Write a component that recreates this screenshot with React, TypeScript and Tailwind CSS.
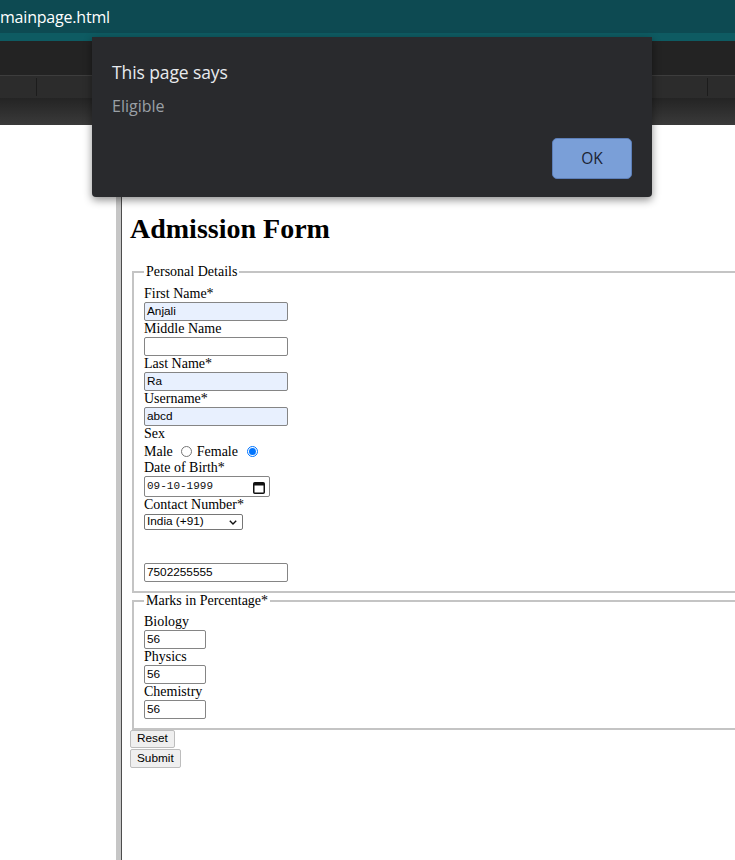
import React from "react";

const serif = "font-['Liberation_Serif','Times_New_Roman',serif]";

function Label({ children }: { children: React.ReactNode }) {
  return <div className="h-[16px] leading-[16px] whitespace-nowrap">{children}</div>;
}

function TextBox({ value, filled, narrow }: { value?: string; filled?: boolean; narrow?: boolean }) {
  return (
    <div
      className={`h-[19px] ${narrow ? "w-[62px]" : "w-[144px]"} border border-[#858585] rounded-[2px] px-[2px] text-[11.8px] leading-[17px] text-black font-['Liberation_Sans',Arial,sans-serif] ${filled ? "bg-[#e8f0fe]" : "bg-white"}`}
    >
      {value}
    </div>
  );
}

function Legend({ children }: { children: React.ReactNode }) {
  return <legend className="px-[2px] leading-[16px]">{children}</legend>;
}

export default function App() {
  return (
    <div className={`relative w-[735px] h-[860px] overflow-hidden bg-white`}>
      {/* browser chrome */}
      <div className="h-[33px] bg-[#0d4a52] flex items-center text-white text-[16px] font-['Open_Sans',sans-serif] leading-none tracking-[-0.2px]">
        mainpage.html
      </div>
      <div className="h-[8px] bg-[#0e5b62]" />
      <div className="h-[34px] bg-[#232323]" />
      <div className="h-px bg-[#3d3d3d]" />
      <div className="h-[22px] bg-[#2c2c2c] flex items-center">
        <div className="w-[36px]" />
        <div className="w-px h-[18px] bg-[#1c1c1c]" />
        <div className="flex-1" />
        <div className="w-px h-[18px] bg-[#1c1c1c]" />
        <div className="w-[27px]" />
      </div>
      <div className="h-[27px] bg-gradient-to-b from-[#242424] to-[#3a3a3a]" />

      {/* page */}
      <div className="flex h-[735px]">
        <div className="w-[116px] shrink-0 bg-white" />
        <div className="w-[5px] shrink-0 bg-[#c6c6c6]" />
        <div className="w-px shrink-0 bg-[#4d4d4d]" />
        <div className={`w-[700px] shrink-0 pl-[8px] pt-[88px] text-[14px] text-black ${serif}`}>
          <h1 className="text-[28px] font-bold leading-[32px] mb-[19px]">Admission Form</h1>

          <fieldset className="mx-[2px] [border:2px_solid_#c4c4c4] px-[10px] pt-[6px] pb-[9px]">
            <Legend>Personal Details</Legend>
            <Label>First Name*</Label>
            <TextBox value="Anjali" filled />
            <Label>Middle Name</Label>
            <TextBox />
            <Label>Last Name*</Label>
            <TextBox value="Ra" filled />
            <Label>Username*</Label>
            <TextBox value="abcd" filled />
            <Label>Sex</Label>
            <div className="h-[18px] flex items-center">
              <span>Male</span>
              <span className="ml-[8px] w-[11px] h-[11px] rounded-full border border-[#767676] bg-white" />
              <span className="ml-[5px]">Female</span>
              <span className="ml-[9px] w-[11px] h-[11px] rounded-full border border-[#0075ff] p-[1px] bg-white flex">
                <span className="w-full h-full rounded-full bg-[#0075ff]" />
              </span>
            </div>
            <Label>Date of Birth*</Label>
            <div className="h-[21px] w-[126px] border border-[#858585] rounded-[2px] bg-white flex items-center justify-between pl-[2px] pr-[4px]">
              <span className="text-[11px] leading-none font-['Liberation_Mono','Courier_New',monospace] text-[#111]">09-10-1999</span>
              <svg width="12" height="13" viewBox="0 0 12 13" className="mt-[1px]">
                <rect x="0.75" y="1.75" width="10.5" height="10.5" rx="1" fill="none" stroke="#111" strokeWidth="1.5" />
                <rect x="1" y="2" width="10" height="2.5" fill="#111" />
              </svg>
            </div>
            <Label>Contact Number*</Label>
            <div className="mt-[1px] h-[16px] w-[99px] border border-[#767676] rounded-[2px] bg-white flex items-center justify-between pl-[2px] pr-[5px] text-[11.8px] leading-none font-['Liberation_Sans',Arial,sans-serif]">
              <span>India (+91)</span>
              <svg width="8" height="5" viewBox="0 0 8 5">
                <path d="M0.8 0.8 L4 4 L7.2 0.8" fill="none" stroke="#111" strokeWidth="1.4" />
              </svg>
            </div>
            <div className="h-[33px]" />
            <TextBox value="7502255555" />
          </fieldset>

          <fieldset className="mx-[2px] [border:2px_solid_#c4c4c4] px-[10px] pt-[5px] pb-[9px]">
            <Legend>Marks in Percentage*</Legend>
            <Label>Biology</Label>
            <TextBox value="56" narrow />
            <Label>Physics</Label>
            <TextBox value="56" narrow />
            <Label>Chemistry</Label>
            <TextBox value="56" narrow />
          </fieldset>

          <div className="flex flex-col items-start font-['Liberation_Sans',Arial,sans-serif] text-[11.8px]">
            <div className="h-[18px] px-[6px] border border-[#bdbdbd] rounded-[2px] bg-[#efefef] flex items-center leading-none">Reset</div>
            <div className="mt-[1px] h-[19px] px-[6px] border border-[#bdbdbd] rounded-[2px] bg-[#efefef] flex items-center leading-none">Submit</div>
          </div>
        </div>
      </div>

      {/* alert dialog */}
      <div className="absolute left-[92px] top-[37px] w-[560px] h-[160px] bg-[#292a2d] rounded-b-[4px] shadow-[0_3px_8px_rgba(0,0,0,0.45)] pl-[20px] pr-[20px] pt-[23px] font-['Open_Sans',sans-serif]">
        <div className="text-[17.5px] leading-[24px] text-[#e8eaed] tracking-[-0.1px]">This page says</div>
        <div className="mt-[12px] text-[16px] leading-[20px] text-[#9aa0a6]">Eligible</div>
        <div className="flex justify-end mt-[22px]">
          <div className="w-[80px] h-[41px] rounded-[5px] bg-[#7a9fd8] border border-[#5d7fb8] flex items-center justify-center text-[15.5px] text-[#1a2333]">
            OK
          </div>
        </div>
      </div>
    </div>
  );
}
